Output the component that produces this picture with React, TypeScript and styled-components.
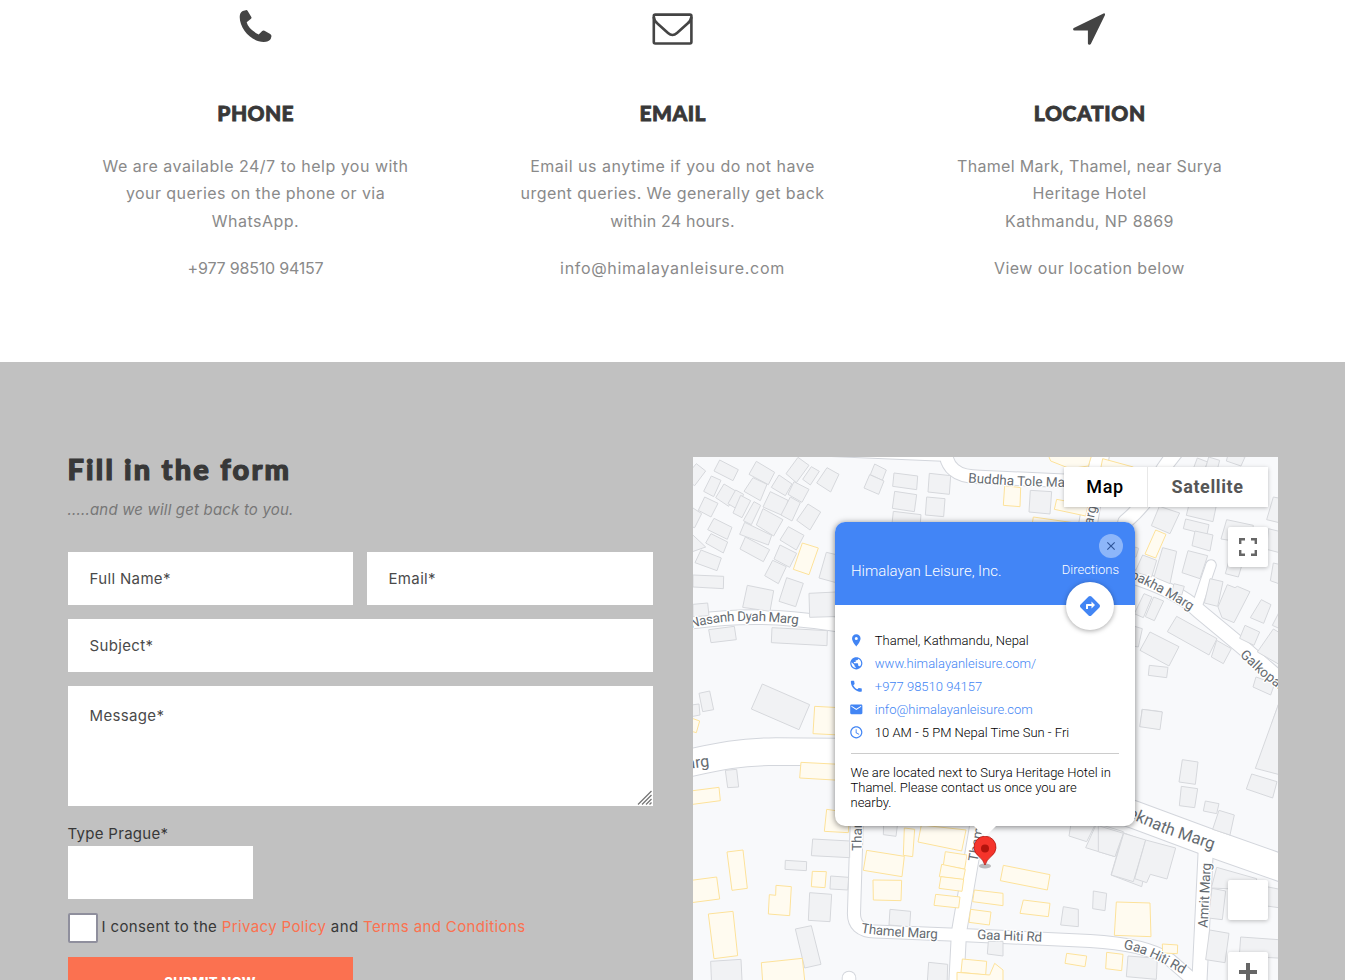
import React from "react";
import styled, { createGlobalStyle } from "styled-components";
import { MdPlace, MdPublic, MdCall, MdEmail, MdAccessTime, MdDirections, MdClose } from "react-icons/md";

const GlobalStyle = createGlobalStyle`
  *, *::before, *::after { box-sizing: border-box; }
  body { margin: 0; background: #fff; font-family: Inter, "Open Sans", sans-serif; }
  h2, h3, p { margin: 0; }
`;

const Page = styled.main`
  height: 980px;
  overflow: hidden;
`;

/* ---------- contact columns ---------- */

const ContactSection = styled.section`
  display: grid;
  grid-template-columns: repeat(3, 417px);
  justify-content: center;
  height: 362px;
  padding-top: 8px;
`;

const ContactColumn = styled.article`
  display: flex;
  flex-direction: column;
  align-items: center;
  text-align: center;
`;

const ContactIcon = styled.svg`
  width: 44px;
  height: 44px;
  fill: #444;
`;

const ContactTitle = styled.h3<{ $spacing: number }>`
  margin-top: 46px;
  font: 900 21px/30px Lato, sans-serif;
  letter-spacing: ${(p) => p.$spacing}px;
  text-indent: ${(p) => p.$spacing}px;
  color: #383838;
  -webkit-text-stroke: 0.8px #383838;
`;

const ContactText = styled.p<{ $first?: boolean }>`
  margin-top: ${(p) => (p.$first ? 25 : 19.6)}px;
  font-size: 16px;
  line-height: 27.4px;
  color: #8a8a8a;
`;

const Line = styled.span<{ $spacing?: number }>`
  display: block;
  white-space: nowrap;
  letter-spacing: ${(p) => p.$spacing ?? 0}px;
`;

/* ---------- form ---------- */

const FormSection = styled.section`
  display: grid;
  grid-template-columns: 585px 585px;
  column-gap: 40px;
  justify-content: center;
  align-items: start;
  padding-top: 95px;
  height: 700px;
  background: #c1c1c1;
`;

const Form = styled.form`
  display: flex;
  flex-direction: column;
  align-items: flex-start;
`;

const FormTitle = styled.h2`
  margin-top: -6px;
  font: 900 29px/36px Lato, sans-serif;
  letter-spacing: 2.2px;
  color: #383838;
  -webkit-text-stroke: 1.2px #383838;
`;

const FormHint = styled.p`
  margin: 9px 0 29px;
  font-size: 15px;
  line-height: 27px;
  font-style: italic;
  letter-spacing: 0.18px;
  color: #777;
`;

const FieldGrid = styled.div`
  display: grid;
  grid-template-columns: 285px 286px;
  gap: 14px;
`;

const Field = styled.input<{ $wide?: boolean }>`
  grid-column: ${(p) => (p.$wide ? "1 / -1" : "auto")};
  width: 100%;
  height: 53px;
  padding: 0 22px;
  border: 0;
  border-radius: 0;
  background: #fff;
  font: 400 15px Inter, sans-serif;
  letter-spacing: 0.35px;
  &::placeholder { color: #4a4a4a; opacity: 1; }
`;

const MessageBox = styled.div`
  grid-column: 1 / -1;
  position: relative;
  height: 120px;
`;

const Message = styled.textarea`
  display: block;
  width: 100%;
  height: 100%;
  padding: 20px 22px;
  border: 0;
  resize: none;
  background: #fff;
  font: 400 15px/20px Inter, sans-serif;
  letter-spacing: 0.35px;
  &::placeholder { color: #4a4a4a; opacity: 1; }
`;

const Grip = styled.svg`
  position: absolute;
  right: 1px;
  bottom: 1px;
  width: 15px;
  height: 15px;
  stroke: #777;
  stroke-width: 1.3;
`;

const CaptchaLabel = styled.label`
  margin-top: 16px;
  font-size: 15px;
  line-height: 24px;
  letter-spacing: 0.3px;
  color: #383838;
`;

const CaptchaField = styled(Field)`
  width: 185px;
`;

const Consent = styled.label`
  display: flex;
  align-items: center;
  height: 30px;
  margin: 14px 0;
  font-size: 15px;
  color: #383838;
  white-space: pre;
`;

const CheckBox = styled.span`
  width: 30px;
  height: 30px;
  margin-right: 4px;
  border: 2px solid #8f8f9d;
  border-radius: 2px;
  background: #fff;
`;

const ConsentText = styled.span`
  padding-bottom: 3px;
  letter-spacing: 0.37px;
`;

const Link = styled.a`
  color: #fb7150;
`;

const Submit = styled.button`
  width: 285px;
  height: 50px;
  padding: 0;
  border: 0;
  background: #fb7150;
  color: #fff;
  font: 800 13px/50px Inter, sans-serif;
  letter-spacing: 0.4px;
`;

/* ---------- map ---------- */

const MapFrame = styled.div`
  position: relative;
  height: 600px;
  overflow: hidden;
  background: #f8f9fb;
  font-family: Roboto, sans-serif;
`;

const MapCanvas = styled.svg`
  display: block;
  width: 585px;
  height: 600px;
`;

const MapTypes = styled.div`
  position: absolute;
  top: 10px;
  right: 10px;
  display: flex;
  box-shadow: 0 1px 4px rgba(0, 0, 0, 0.25);
`;

const MapType = styled.div<{ $active?: boolean; $width: number }>`
  width: ${(p) => p.$width}px;
  height: 40px;
  background: #fff;
  border-left: ${(p) => (p.$active ? 0 : "1px solid #e8e8e8")};
  text-align: center;
  font: 500 18px/40px Roboto, sans-serif;
  font-weight: ${(p) => (p.$active ? 500 : 700)};
  letter-spacing: 0.6px;
  color: ${(p) => (p.$active ? "#000" : "#565656")};
`;

const MapButton = styled.div<{ $top: number }>`
  position: absolute;
  top: ${(p) => p.$top}px;
  right: 10px;
  display: flex;
  align-items: center;
  justify-content: center;
  width: 40px;
  height: 40px;
  border-radius: 2px;
  background: #fff;
  box-shadow: 0 1px 4px rgba(0, 0, 0, 0.25);
  svg { width: 18px; height: 18px; fill: none; stroke: #666; }
`;

const InfoCard = styled.div`
  position: absolute;
  top: 65px;
  left: 142px;
  width: 300px;
  height: 304px;
  border-radius: 10px;
  background: #fff;
  box-shadow: 0 1px 6px rgba(0, 0, 0, 0.5);
  font-weight: 300;
  font-size: 13px;
  color: #000;
`;

const InfoHeader = styled.div`
  display: flex;
  justify-content: space-between;
  align-items: flex-end;
  height: 83px;
  padding: 0 15.5px 24px 16.5px;
  border-radius: 10px 10px 0 0;
  background: #4285f6;
  color: #fff;
`;

const InfoName = styled.div`
  font-size: 15px;
  line-height: 20px;
  letter-spacing: -0.03px;
`;

const InfoDirections = styled.div`
  font-size: 13px;
  line-height: 22px;
`;

const RoundButton = styled.div<{ $size: number; $top: number; $left: number; $faded?: boolean }>`
  position: absolute;
  top: ${(p) => p.$top}px;
  left: ${(p) => p.$left}px;
  display: flex;
  align-items: center;
  justify-content: center;
  width: ${(p) => p.$size}px;
  height: ${(p) => p.$size}px;
  border-radius: 50%;
  background: ${(p) => (p.$faded ? "rgba(255,255,255,.4)" : "#fff")};
  box-shadow: ${(p) => (p.$faded ? "none" : "0 1px 5px rgba(0,0,0,.35)")};
  color: ${(p) => (p.$faded ? "#2f5599" : "#4285f4")};
`;

const InfoBody = styled.div`
  padding: 24px 16px 0;
`;

const InfoRow = styled.div<{ $link?: boolean }>`
  display: flex;
  align-items: center;
  gap: 11px;
  height: 23px;
  margin-left: -1.3px;
  line-height: 23px;
  color: ${(p) => (p.$link ? "#4285f4" : "#000")};
  svg { flex: none; width: 14.6px; height: 14.6px; color: #4285f4; }
`;

const InfoNote = styled.div`
  margin: 9px 0 0;
  padding-top: 11px;
  border-top: 1px solid #ccc;
  line-height: 15px;
  text-indent: 0;
`;

const CardTip = styled.svg`
  position: absolute;
  left: 139px;
  top: 303.5px;
  width: 22px;
  height: 12px;
  fill: #fff;
`;

const Pin = styled.svg`
  position: absolute;
  left: 279px;
  top: 379px;
  width: 26px;
  height: 34px;
`;

/* Building outlines, one sheet per map area; points are thirds of a pixel from the sheet origin. */
type Sheet = { x: number; y: number; plain: string[]; shops: string[] };

const sheets: Sheet[] = [
  {
    x: 693, y: 457,
    plain: [
      "-20,55 10,20 38,42 5,86 -20,70", "80,9 136,38 120,71 63,42", "55,57 84,70 62,119 32,103",
      "93,81 130,103 107,148 68,122", "128,99 152,112 130,155 105,140", "143,115 173,131 147,182 120,168",
      "35,120 75,139 54,180 16,160", "-20,140 26,170 5,212 -20,205", "190,13 245,46 226,83 168,52",
      "180,62 222,82 202,131 153,103", "183,134 203,145 175,203 151,191", "63,184 117,211 103,247 44,218",
      "54,230 104,255 91,288 38,258", "-10,225 38,270 -10,287", "24,279 85,303 72,341 6,317",
      "0,354 92,358 91,395 0,390", "155,196 236,235 226,264 140,232", "157,240 230,278 211,314 141,276",
      "210,155 270,188 242,237 190,204", "232,104 285,130 272,177 210,150", "258,54 297,81 277,116 235,91",
      "315,1 348,25 310,77 279,50", "355,29 379,43 352,84 329,67", "402,32 438,52 413,105 371,78",
      "303,74 348,97 327,136 285,112", "292,120 322,137 297,192 264,174", "345,141 383,165 351,219 311,190",
      "286,209 333,235 310,279 261,249", "261,264 311,289 290,331 243,306", "239,310 280,329 256,380 215,356",
      "281,362 331,379 308,449 258,433", "400,286 460,300 440,380 378,363", "163,385 242,401 231,463 149,451",
      "348,409 450,404 450,478 350,481", "0,442 44,438 48,476 0,479", "47,518 124,508 130,548 54,557",
      "237,512 403,521 402,566 235,557",
    ],
    shops: ["328,258 376,273 348,353 301,337"],
  },
  {
    x: 693, y: 637,
    plain: [
      "18,169 50,162 62,218 29,224", "-5,204 18,201 21,234 -5,239", "208,141 350,203 318,278 175,216",
      "97,400 131,397 137,450 104,452",
    ],
    shops: [
      "-8,242 20,252 10,287 -8,282", "365,208 440,212 440,294 360,290", "324,376 440,382 440,430 320,423",
      "-8,462 78,451 82,491 -8,503",
    ],
  },
  {
    x: 693, y: 800,
    plain: [
      "359,117 470,123 470,173 355,167", "277,181 341,185 340,212 276,208", "413,228 467,232 464,270 411,267",
      "350,278 416,283 411,365 346,361", "307,387 355,377 384,493 335,504", "53,484 144,478 148,560 56,560",
      "572,60 614,70 609,109 571,104", "591,328 653,334 650,380 588,375", "707,487 764,493 762,560 702,560",
      "886,424 930,424 930,468 883,462",
    ],
    shops: [
      "401,28 470,38 466,98 394,94", "102,156 150,150 163,265 117,271", "-5,241 71,231 80,297 -5,308",
      "358,214 400,215 396,263 355,260", "249,256 295,260 290,347 226,342 229,284 248,286",
      "46,342 120,334 134,467 63,476", "205,488 328,475 336,550 210,560", "634,84 665,88 659,170 631,166",
      "685,75 819,90 806,153 675,126", "521,151 634,169 627,230 511,211", "540,240 626,241 624,302 541,300",
      "757,155 822,165 815,207 751,196", "746,193 817,208 811,239 739,230", "744,230 812,238 807,274 738,265",
      "728,283 801,291 797,324 723,316", "844,270 930,280 930,317 839,305", "833,328 894,336 889,375 828,367",
      "808,477 881,484 878,525 804,517", "792,517 890,525 905,490 930,510 930,560 792,560",
    ],
  },
  {
    x: 840, y: 457,
    plain: [
      "104,21 139,39 127,70 91,53", "89,53 132,72 116,112 72,93", "162,48 233,57 230,98 158,88",
      "268,49 332,56 328,112 264,105", "164,103 230,113 223,164 157,154", "260,120 315,125 311,179 256,174",
      "160,163 243,173 240,210 155,210", "571,100 635,104 630,171 567,165",
    ],
    shops: [
      "494,86 542,92 540,149 490,145", "650,127 744,145 737,177 643,157", "580,180 720,200 715,230 576,205",
      "625,-5 755,-5 745,27 690,35 632,12", "788,5 880,30 880,70 778,55",
    ],
  },
  {
    x: 835, y: 680,
    plain: [
      "710,420 780,435 755,485 702,468", "785,430 865,455 840,530 752,503", "865,458 950,490 920,620 828,585",
    ],
    shops: ["505,556 645,584 637,630 496,602"],
  },
  {
    x: 1120, y: 457,
    plain: [
      "232,3 263,15 250,45 218,40", "266,0 299,10 290,45 255,40", "325,-10 375,0 363,27 319,12",
      "210,130 290,140 279,194 199,175", "118,148 179,168 150,230 94,206", "197,186 267,203 261,233 190,215",
      "225,222 279,234 270,282 216,266", "204,281 263,296 240,365 186,347", "128,272 170,283 150,380 102,360",
      "68,294 110,310 95,360 45,345", "460,120 490,126 490,200 440,188", "320,188 400,205 390,260 303,246",
      "445,215 490,226 490,290 440,277", "460,318 490,325 490,385 451,371", "330,300 370,310 355,360 316,350",
      "162,380 193,388 185,415 155,407", "270,365 309,374 293,448 253,438",
      "322,383 345,392 352,388 390,404 342,497 306,482 294,450", "424,428 453,443 431,499 391,482",
      "480,460 500,470 490,520 457,505", "375,505 419,525 402,565 359,544", "460,516 500,540 500,635 412,585",
      "72,410 96,420 70,482 43,470", "101,420 131,432 103,491 76,479", "170,478 291,545 267,594 142,524",
      "290,550 334,575 310,620 274,600", "90,525 177,569 147,627 60,580", "88,625 144,631 140,662 85,655",
      "44,508 67,515 55,570 44,568", "408,660 464,680 452,714 399,690", "66,757 126,764 122,790 63,790",
      "480,730 500,730 500,800 455,800", "44,270 56,274 48,300 44,300",
    ],
    shops: ["107,219 138,232 107,303 75,291"],
  },
  {
    x: 1100, y: 700,
    plain: [
      "127,28 187,36 180,89 119,80", "540,0 580,20 580,235 466,205", "455,222 531,245 518,294 439,267",
      "247,179 294,186 286,253 237,246", "244,259 293,266 284,323 238,317", "316,303 357,311 350,341 310,333",
      "357,331 403,345 390,405 338,388", "-5,377 70,400 45,470 -5,455", "71,400 137,420 100,545 34,525",
      "137,420 227,444 201,537 151,523 140,548 104,536", "350,502 470,536 465,570 334,564",
      "336,565 377,573 367,659 325,654", "500,560 550,570 550,625 500,618", "-20,573 20,580 15,632 -22,626",
      "329,690 387,700 375,788 317,779", "422,711 550,720 550,775 418,768", "84,768 172,775 169,838 79,830",
      "-110,620 -65,628 -65,680 -118,675",
    ],
    shops: [
      "49,606 150,609 153,710 43,706", "187,732 233,735 232,761 188,759", "20,757 69,763 65,812 17,806",
      "-100,760 -40,768 -45,800 -105,790", "-230,600 -150,610 -155,650 -240,640",
    ],
  },
];

const roads: { d: string; w: number }[] = [
  { d: "M780 448 L943 455", w: 12 },
  { d: "M945 445 Q945 463 954 470 Q962 477 980 477 L1070 481", w: 13 },
  { d: "M1101 450 L1087 530", w: 18 },
  { d: "M1182 445 Q1160 470 1154 487 Q1146 504 1125 522", w: 14 },
  { d: "M685 622.5 Q743 614 793 619 T850 628", w: 14 },
  { d: "M685 764 C720 756 740 752 776 751.5 L835 752 C960 755 1050 785 1135 815 L1205 841 L1290 871", w: 27 },
  { d: "M857 815 L854 912 Q853 931 875 931.5 L950 934.5 L1090 941 Q1145 944 1170 960 L1200 986", w: 12.5 },
  { d: "M979 815 L959 932 L956 990", w: 14.5 },
  { d: "M1206 845 L1199 990", w: 14.5 },
  { d: "M1125 574 Q1178 590 1199 611 L1240 645 L1290 688", w: 14.5 },
  { d: "M1197 606 L1211 565", w: 10 },
  { d: "M849 978 L849 990", w: 13 },
];

const labels: { text: string; d: string; size?: number; length?: number }[] = [
  { text: "Nasanh Dyah Marg", d: "M691 628 Q722 620 750 621 Q775 621 810 626", length: 108 },
  { text: "arg", d: "M687 769 L720 765", size: 16 },
  { text: "Buddha Tole Marg", d: "M968 482.5 L1012 485.5 L1100 488" },
  { text: "Marg", d: "M1090 537 L1099 495" },
  { text: "pakha Marg", d: "M1130 578 Q1160 591 1200 617", length: 69 },
  { text: "Galkopakha", d: "M1239.5 655.5 L1259 674 L1310 714" },
  { text: "eknath Marg", d: "M1127 817 L1165 833.5 L1220 852", size: 16.5 },
  { text: "Amrit Marg", d: "M1207.5 928 L1211.5 850", length: 65 },
  { text: "Thamel", d: "M861.5 851 L862 800" },
  { text: "Thamel", d: "M977.5 862 L987 805" },
  { text: "Thamel Marg", d: "M861 932.5 Q880 936.5 960 939.5", length: 77 },
  { text: "Gaa Hiti Rd", d: "M977 939 L1060 942.5", length: 65 },
  { text: "Gaa Hiti Rd", d: "M1123.5 949 Q1148 952 1190 979", length: 65 },
];

function StreetMap() {
  return (
    <MapCanvas viewBox="693 457 585 600">
      {roads.map((r, i) => (
        <path key={i} d={r.d} fill="none" stroke="#d3d6dc" strokeWidth={r.w + 1.6} strokeLinecap="round" />
      ))}
      {roads.map((r, i) => (
        <path key={i} d={r.d} fill="none" stroke="#fff" strokeWidth={r.w - 0.4} strokeLinecap="round" />
      ))}
      {sheets.map((s, i) => (
        <g key={i} transform={`translate(${s.x} ${s.y}) scale(.33333)`} strokeWidth={3}>
          <g fill="#f1f2f4" stroke="#d6d8dc">
            {s.plain.map((p) => <polygon key={p} points={p} />)}
          </g>
          <g fill="#fffbf0" stroke="#fde29a">
            {s.shops.map((p) => <polygon key={p} points={p} />)}
          </g>
        </g>
      ))}
      {labels.map((l, i) => (
        <g key={i}>
          <path id={`street-${i}`} d={l.d} fill="none" />
          <text fontSize={l.size ?? 13.5} fontWeight={400} fill="#656b71" stroke="#fff" strokeWidth={2.5} paintOrder="stroke" strokeLinejoin="round" textLength={l.length}>
            <textPath href={`#street-${i}`}>{l.text}</textPath>
          </text>
        </g>
      ))}
    </MapCanvas>
  );
}

export default function App() {
  return (
    <>
      <GlobalStyle />
      <Page>
        <ContactSection>
          <ContactColumn>
            <ContactIcon viewBox="234.3 8 44 44">
              <path d="M240 17C240 14 241 12 243 11L246 10.2Q247.3 9.8 248 11L251.6 17Q252.2 18 251.3 18.8L247 22.3Q248.5 29 259 34.5L262.5 31Q263.5 30 264.8 30.7L270.5 34Q272 35 271.7 36.5L271 39Q269 42 264 42C252 42 240 29 240 17Z" />
            </ContactIcon>
            <ContactTitle $spacing={0.4}>PHONE</ContactTitle>
            <ContactText $first>
              <Line $spacing={0.49}>We are available 24/7 to help you with</Line>
              <Line $spacing={0.43}>your queries on the phone or via</Line>
              <Line $spacing={0.5}>WhatsApp.</Line>
            </ContactText>
            <ContactText><Line $spacing={-0.2}>+977 98510 94157</Line></ContactText>
          </ContactColumn>
          <ContactColumn>
            <ContactIcon viewBox="651 8 44 44">
              <g fill="none" stroke="#444" strokeWidth="2.6" strokeLinejoin="round">
                <rect x="653.8" y="14.6" width="37.6" height="28.9" rx="1.5" />
                <path d="M653.8 17Q654 21 658 24L668 33Q672.5 37 677 33L687 24Q691 21 691.4 17" />
              </g>
            </ContactIcon>
            <ContactTitle $spacing={0.5}>EMAIL</ContactTitle>
            <ContactText $first>
              <Line $spacing={0.5}>Email us anytime if you do not have</Line>
              <Line $spacing={0.43}>urgent queries. We generally get back</Line>
              <Line $spacing={0.2}>within 24 hours.</Line>
            </ContactText>
            <ContactText><Line $spacing={0.69}>info@himalayanleisure.com</Line></ContactText>
          </ContactColumn>
          <ContactColumn>
            <ContactIcon viewBox="1068 8 44 44">
              <path d="M1073.8 28L1103.5 13.4Q1105.5 13 1105 15L1090.8 44Q1090.2 45 1089 44.8Q1088 44.6 1087.9 43.5V30.6H1074.5Q1073.2 30.5 1073.1 29.4Q1073.1 28.4 1073.8 28Z" />
            </ContactIcon>
            <ContactTitle $spacing={0.65}>LOCATION</ContactTitle>
            <ContactText $first>
              <Line $spacing={0.3}>Thamel Mark, Thamel, near Surya</Line>
              <Line $spacing={0.36}>Heritage Hotel</Line>
              <Line $spacing={0.4}>Kathmandu, NP 8869</Line>
            </ContactText>
            <ContactText><Line $spacing={0.43}>View our location below</Line></ContactText>
          </ContactColumn>
        </ContactSection>

        <FormSection>
          <Form>
            <FormTitle>Fill in the form</FormTitle>
            <FormHint>.....and we will get back to you.</FormHint>
            <FieldGrid>
              <Field placeholder="Full Name*" />
              <Field placeholder="Email*" />
              <Field $wide placeholder="Subject*" />
              <MessageBox>
                <Message placeholder="Message*" />
                <Grip viewBox="0 0 15 15"><path d="M1 14.5L14.5 1M5 14.5L14.5 5M9 14.5L14.5 9M12.5 14.5L14.5 12.5" /></Grip>
              </MessageBox>
            </FieldGrid>
            <CaptchaLabel>Type Prague*</CaptchaLabel>
            <CaptchaField />
            <Consent>
              <CheckBox />
              <ConsentText>I consent to the <Link>Privacy Policy</Link> and <Link>Terms and Conditions</Link></ConsentText>
            </Consent>
            <Submit type="button">SUBMIT NOW</Submit>
          </Form>

          <MapFrame>
            <StreetMap />
            <MapTypes>
              <MapType $active $width={83}>Map</MapType>
              <MapType $width={121}>Satellite</MapType>
            </MapTypes>
            <MapButton $top={70}>
              <svg viewBox="0 0 18 18"><path d="M1.2 6V1.2H6M12 1.2H16.8V6M16.8 12V16.8H12M6 16.8H1.2V12" strokeWidth="2.4" /></svg>
            </MapButton>
            <MapButton $top={423} />
            <MapButton $top={495}>
              <svg viewBox="0 0 18 18"><path d="M9 0V18M0 9H18" strokeWidth="4" /></svg>
            </MapButton>
            <InfoCard>
              <InfoHeader>
                <InfoName>Himalayan Leisure, Inc.</InfoName>
                <InfoDirections>Directions</InfoDirections>
              </InfoHeader>
              <RoundButton $faded $size={24} $top={12} $left={264}><MdClose size={14} /></RoundButton>
              <RoundButton $size={48} $top={60} $left={231}><MdDirections size={24} /></RoundButton>
              <InfoBody>
                <InfoRow><MdPlace />Thamel, Kathmandu, Nepal</InfoRow>
                <InfoRow $link><MdPublic />www.himalayanleisure.com/</InfoRow>
                <InfoRow $link><MdCall />+977 98510 94157</InfoRow>
                <InfoRow $link><MdEmail />info@himalayanleisure.com</InfoRow>
                <InfoRow><MdAccessTime />10 AM - 5 PM Nepal Time Sun - Fri</InfoRow>
                <InfoNote>We are located next to Surya Heritage Hotel in Thamel. Please contact us once you are nearby.</InfoNote>
              </InfoBody>
              <CardTip viewBox="0 0 22 12"><path d="M0 0H22L11 11Z" /></CardTip>
            </InfoCard>
            <Pin viewBox="0 0 26 34">
              <ellipse cx="13" cy="30" rx="6" ry="2.5" fill="#000" opacity=".25" />
              <path d="M13 29Q11.5 24 6.5 20A11 11 0 1 1 19.5 20Q14.5 24 13 29Z" fill="#f5342b" stroke="#b3140d" strokeWidth=".8" />
              <circle cx="13" cy="12.5" r="4" fill="#b3140d" />
            </Pin>
          </MapFrame>
        </FormSection>
      </Page>
    </>
  );
}
